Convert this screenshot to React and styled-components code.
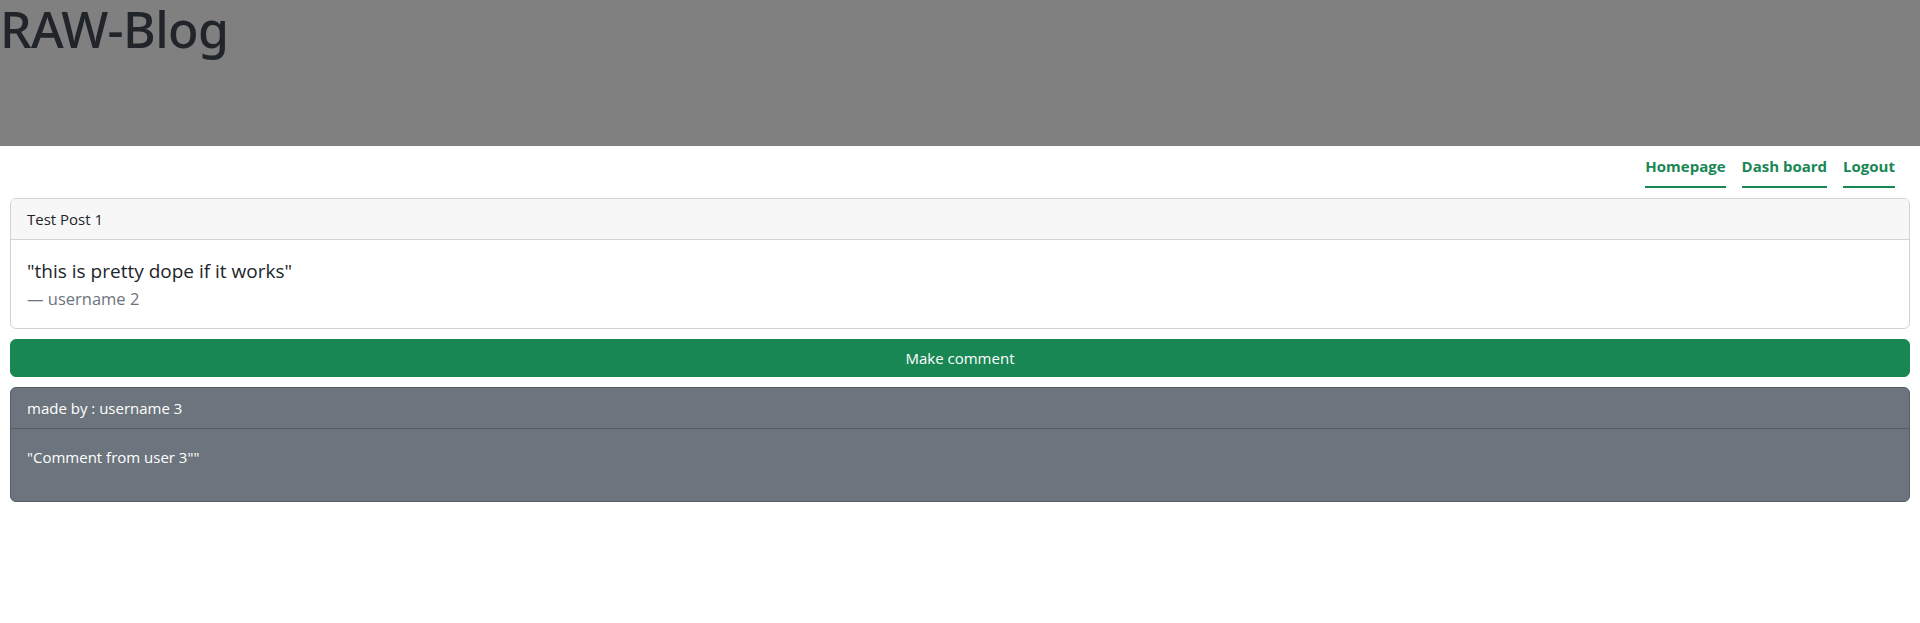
import React from "react";
import styled, { createGlobalStyle } from "styled-components";

const GlobalStyle = createGlobalStyle`
  * { box-sizing: border-box; }
  body {
    margin: 0;
    font-family: "Open Sans", "Noto Sans", sans-serif;
    font-size: 16px;
    line-height: 1.5;
    color: #212529;
    background: #fff;
  }
`;

const Banner = styled.header`
  height: 146px;
  background-color: grey;
`;

const Title = styled.h1`
  margin: 0;
  font-family: "Noto Sans", "Open Sans", sans-serif;
  font-size: 50px;
  font-weight: 500;
  line-height: 58px;
  letter-spacing: -0.6px;
  color: #212529;
`;

const Nav = styled.nav`
  display: flex;
  justify-content: flex-end;
  gap: 16px;
  padding: 0 25px 0 10px;
`;

const NavLink = styled.a`
  padding: 8px 0;
  font-weight: 700;
  font-size: 15px;
  color: #198754;
  text-decoration: none;
  border-bottom: 2px solid #198754;
  line-height: 24px;
`;

const Main = styled.main`
  display: flex;
  flex-direction: column;
  gap: 10px;
  padding: 10px 10px 0 10px;
`;

const Card = styled.div`
  border: 1px solid ${(p) => (p.$dark ? "#555c63" : "#d3d3d3")};
  border-radius: 6px;
  background: ${(p) => (p.$dark ? "#6c757d" : "#fff")};
  color: ${(p) => (p.$dark ? "#fff" : "#212529")};
  overflow: hidden;
`;

const CardHeader = styled.div`
  padding: 8px 16px;
  font-size: 15px;
  line-height: 24px;
  background: ${(p) => (p.$dark ? "transparent" : "#f7f7f7")};
  border-bottom: 1px solid ${(p) => (p.$dark ? "#555c63" : "#d3d3d3")};
`;

const CardBody = styled.div`
  padding: 16px;
`;

const Quote = styled.blockquote`
  margin: 0;
  font-size: 19px;
  line-height: 30px;

  p {
    margin: 0;
  }
`;

const QuoteFooter = styled.footer`
  font-size: 16.5px;
  line-height: 26px;
  color: #6c757d;

  &::before {
    content: "\\2014\\00A0";
  }
`;

const CommentText = styled.p`
  margin: 0 0 16px;
  font-size: 15px;
  line-height: 24px;
`;

const Button = styled.button`
  display: block;
  width: 100%;
  padding: 6px 12px;
  border: 1px solid #198754;
  border-radius: 6px;
  background: #198754;
  color: #fff;
  font-family: inherit;
  font-size: 15px;
  line-height: 24px;
  cursor: pointer;
`;

export default function App() {
  return (
    <>
      <GlobalStyle />
      <Banner>
        <Title>RAW-Blog</Title>
      </Banner>
      <Nav>
        <NavLink href="#">Homepage</NavLink>
        <NavLink href="#">Dash board</NavLink>
        <NavLink href="#">Logout</NavLink>
      </Nav>
      <Main>
        <Card>
          <CardHeader>Test Post 1</CardHeader>
          <CardBody>
            <Quote>
              <p>"this is pretty dope if it works"</p>
              <QuoteFooter>username 2</QuoteFooter>
            </Quote>
          </CardBody>
        </Card>
        <Button>Make comment</Button>
        <Card $dark>
          <CardHeader $dark>made by : username 3</CardHeader>
          <CardBody>
            <CommentText>"Comment from user 3""</CommentText>
          </CardBody>
        </Card>
      </Main>
    </>
  );
}
